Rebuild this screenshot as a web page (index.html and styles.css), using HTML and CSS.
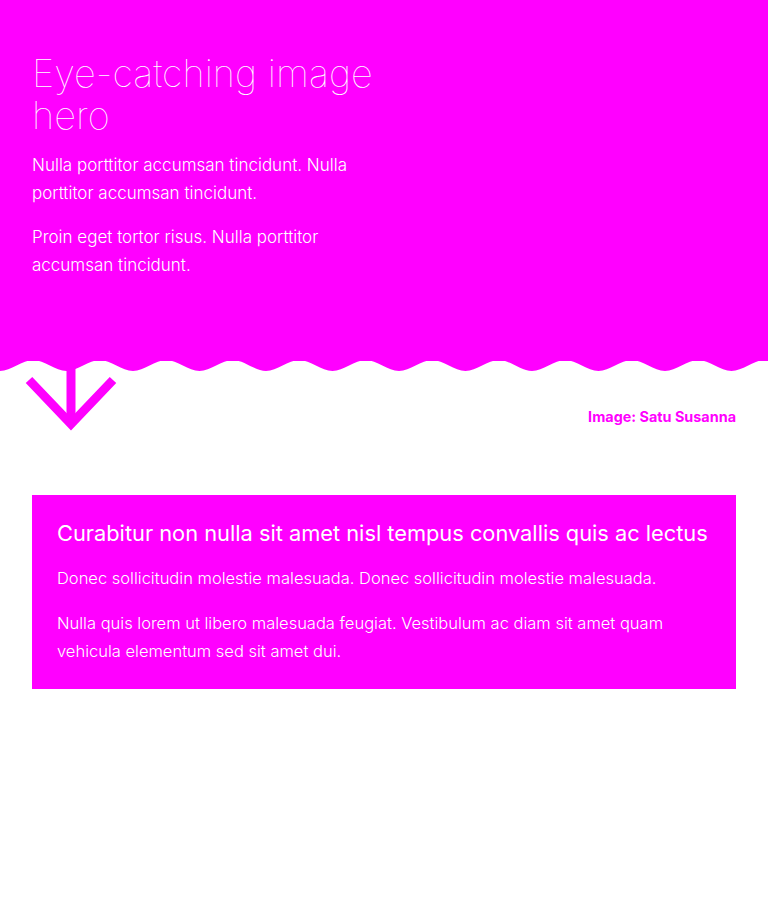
FILE: index.html
```html
<!DOCTYPE html>
<html lang="en">
<head>
<meta charset="utf-8">
<title>Hero</title>
<link rel="stylesheet" href="styles.css">
</head>
<body>
<header class="hero">
  <div class="hero-grid">
    <div class="hero-text">
      <h1 class="hero-title">Eye-catching image hero</h1>
      <p class="hero-p">Nulla porttitor accumsan tincidunt. Nulla porttitor accumsan tincidunt.</p>
      <p class="hero-p">Proin eget tortor risus. Nulla porttitor accumsan tincidunt.</p>
    </div>
    <div class="hero-media"></div>
  </div>
</header>
<svg class="wave" viewBox="0 0 768 12" preserveAspectRatio="none" aria-hidden="true">
  <path fill="#ff00ff" d="M0 0 L0 11 C11.08 11 22.17 0 33.25 0 S55.42 11 66.5 11 S88.67 0 99.75 0 S121.92 11 133 11 S155.17 0 166.25 0 S188.42 11 199.5 11 S221.67 0 232.75 0 S254.92 11 266 11 S288.17 0 299.25 0 S321.42 11 332.5 11 S354.67 0 365.75 0 S387.92 11 399 11 S421.17 0 432.25 0 S454.42 11 465.5 11 S487.67 0 498.75 0 S520.92 11 532 11 S554.17 0 565.25 0 S587.42 11 598.5 11 S620.67 0 631.75 0 S653.92 11 665 11 S687.17 0 698.25 0 S720.42 11 731.5 11 S753.67 0 764.75 0 S786.92 11 798 11 L798 0 Z"/>
</svg>
<div class="media-row">
  <svg class="arrow" width="96" height="72" viewBox="0 0 96 72" aria-hidden="true">
    <line x1="47" y1="0" x2="47" y2="60" stroke="#ff00ff" stroke-width="9"/>
    <polyline points="5,19 47,63 89,19" fill="none" stroke="#ff00ff" stroke-width="9" stroke-linejoin="miter"/>
  </svg>
  <p class="credit">Image: Satu Susanna</p>
</div>
<section class="card">
  <h2 class="card-title">Curabitur non nulla sit amet nisl tempus convallis quis ac lectus</h2>
  <p class="card-p">Donec sollicitudin molestie malesuada. Donec sollicitudin molestie malesuada.</p>
  <p class="card-p">Nulla quis lorem ut libero malesuada feugiat. Vestibulum ac diam sit amet quam vehicula elementum sed sit amet dui.</p>
</section>
</body>
</html>
```
FILE: styles.css
```css
html, body {
  margin: 0;
  padding: 0;
  background: #ffffff;
}
body {
  font-family: Inter, Roboto, "Liberation Sans", sans-serif;
  color: #ffffff;
}
.hero {
  background: #ff00ff;
  box-sizing: border-box;
  min-height: 361px;
  padding: 52px 32px 0;
}
.hero-grid {
  display: grid;
  grid-template-columns: 352px 1fr;
}
.hero-title {
  margin: 0 0 15px;
  font-size: 38px;
  line-height: 42px;
  font-weight: 100;
}
.hero-p {
  margin: 0 0 16px;
  font-size: 17px;
  line-height: 28px;
  font-weight: 300;
}
.wave {
  display: block;
  width: 100%;
  height: 12px;
  margin-top: -1px;
}
.media-row {
  display: flex;
  justify-content: space-between;
  align-items: flex-start;
  padding: 0 32px 0 24px;
  margin-top: -11px;
}
.arrow {
  display: block;
}
.credit {
  margin: 46px 0 0;
  font-size: 14.4px;
  line-height: 20px;
  font-weight: 700;
  color: #ff00ff;
}
.card {
  margin: 62px 32px 0;
  padding: 24px 25px 24px;
  background: #ff00ff;
}
.card-title {
  margin: 0 0 17px;
  font-size: 21.8px;
  line-height: 28px;
  font-weight: 400;
}
.card-p {
  margin: 0 0 17px;
  font-size: 16.5px;
  line-height: 28px;
  font-weight: 300;
}
.card-p:last-child {
  margin-bottom: 0;
}
```
